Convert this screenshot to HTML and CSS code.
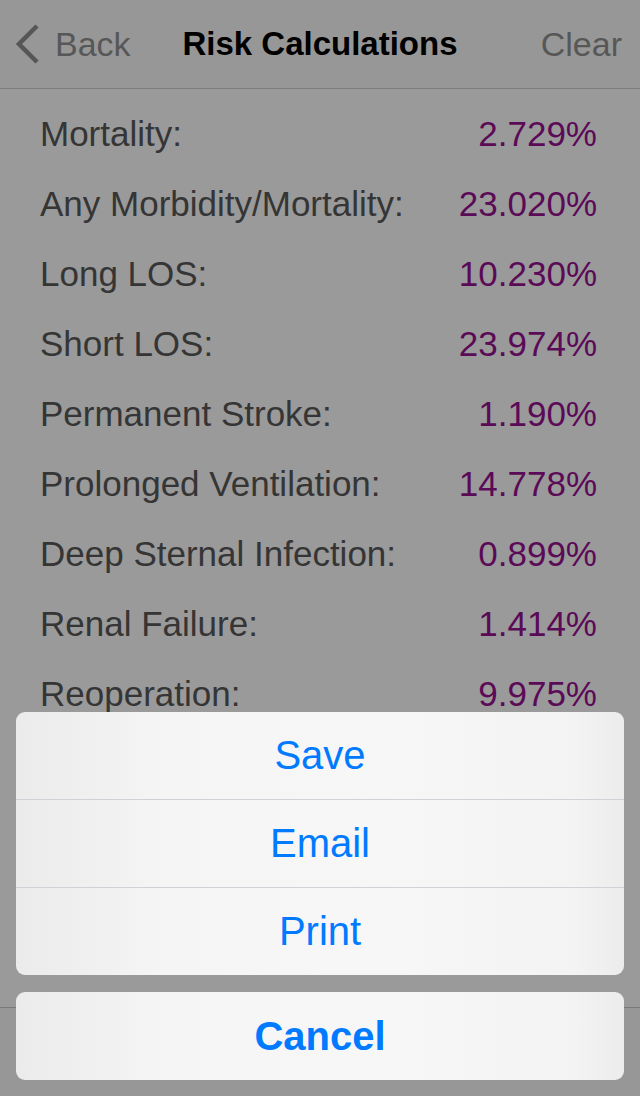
FILE: index.html
```html
<!DOCTYPE html>
<html>
<head>
<meta charset="utf-8">
<link rel="stylesheet" href="styles.css">
</head>
<body>
<div class="screen">
  <div class="nav">
    <div class="nav-left">
      <svg class="chev" width="26" height="44" viewBox="0 0 26 44"><path d="M22 3 L4 21 L22 39" fill="none" stroke="#565656" stroke-width="4.5" stroke-linecap="butt" stroke-linejoin="miter"/></svg>
      <span class="back">Back</span>
    </div>
    <div class="title">Risk Calculations</div>
    <div class="nav-right">Clear</div>
  </div>
  <div class="content">
    <div class="row"><span class="label">Mortality:</span><span class="value">2.729%</span></div>
    <div class="row"><span class="label">Any Morbidity/Mortality:</span><span class="value">23.020%</span></div>
    <div class="row"><span class="label">Long LOS:</span><span class="value">10.230%</span></div>
    <div class="row"><span class="label">Short LOS:</span><span class="value">23.974%</span></div>
    <div class="row"><span class="label">Permanent Stroke:</span><span class="value">1.190%</span></div>
    <div class="row"><span class="label">Prolonged Ventilation:</span><span class="value">14.778%</span></div>
    <div class="row"><span class="label">Deep Sternal Infection:</span><span class="value">0.899%</span></div>
    <div class="row"><span class="label">Renal Failure:</span><span class="value">1.414%</span></div>
    <div class="row"><span class="label">Reoperation:</span><span class="value">9.975%</span></div>
  </div>
  <div class="toolbar"></div>

  <div class="sheet-wrap">
    <div class="sheet">
      <div class="action">Save</div>
      <div class="action">Email</div>
      <div class="action">Print</div>
    </div>
    <div class="sheet cancel">
      <div class="action bold">Cancel</div>
    </div>
  </div>
</div>
</body>
</html>
```

FILE: styles.css
```css
html, body {
  margin: 0;
  padding: 0;
}
body {
  width: 640px;
  height: 1096px;
  overflow: hidden;
  font-family: "Liberation Sans", Arial, sans-serif;
}
.screen {
  position: relative;
  width: 640px;
  height: 1096px;
  display: flex;
  flex-direction: column;
  background: #9a9a9a;
  overflow: hidden;
}
.nav {
  height: 88px;
  flex: none;
  background: #979797;
  border-bottom: 1px solid #7c7c7c;
  display: grid;
  grid-template-columns: 1fr auto 1fr;
  align-items: center;
  font-size: 34px;
}
.nav-left {
  display: flex;
  align-items: center;
  padding-left: 15px;
  color: #575757;
}
.chev {
  display: block;
  margin-right: 14px;
  margin-top: 2px;
}
.back {
  line-height: 40px;
}
.title {
  font-weight: bold;
  font-size: 33px;
  color: #000;
  text-align: center;
}
.nav-right {
  text-align: right;
  padding-right: 18px;
  color: #575757;
}
.content {
  flex: 1;
  padding: 10px 43px 0 40px;
}
.row {
  height: 70px;
  display: flex;
  align-items: center;
  justify-content: space-between;
  font-size: 35px;
}
.label {
  color: #353535;
}
.value {
  color: #5a0a56;
}
.toolbar {
  height: 88px;
  flex: none;
  background: #979797;
  border-top: 1px solid #7a7a7a;
}
.sheet-wrap {
  position: absolute;
  left: 16px;
  right: 16px;
  bottom: 16px;
  display: flex;
  flex-direction: column;
  gap: 17px;
}
.sheet {
  border-radius: 9px;
  overflow: hidden;
  background: linear-gradient(to right, #ebebeb 0%, #f5f5f5 25%, #f7f7f7 60%, #f3f3f3 92%, #ececec 100%);
}
.action {
  height: 87px;
  display: flex;
  align-items: center;
  justify-content: center;
  font-size: 40px;
  color: #007aff;
  border-top: 1px solid #d0d0d6;
}
.action:first-child {
  border-top: none;
}
.cancel .action {
  height: 88px;
}
.bold {
  font-weight: bold;
}
```
